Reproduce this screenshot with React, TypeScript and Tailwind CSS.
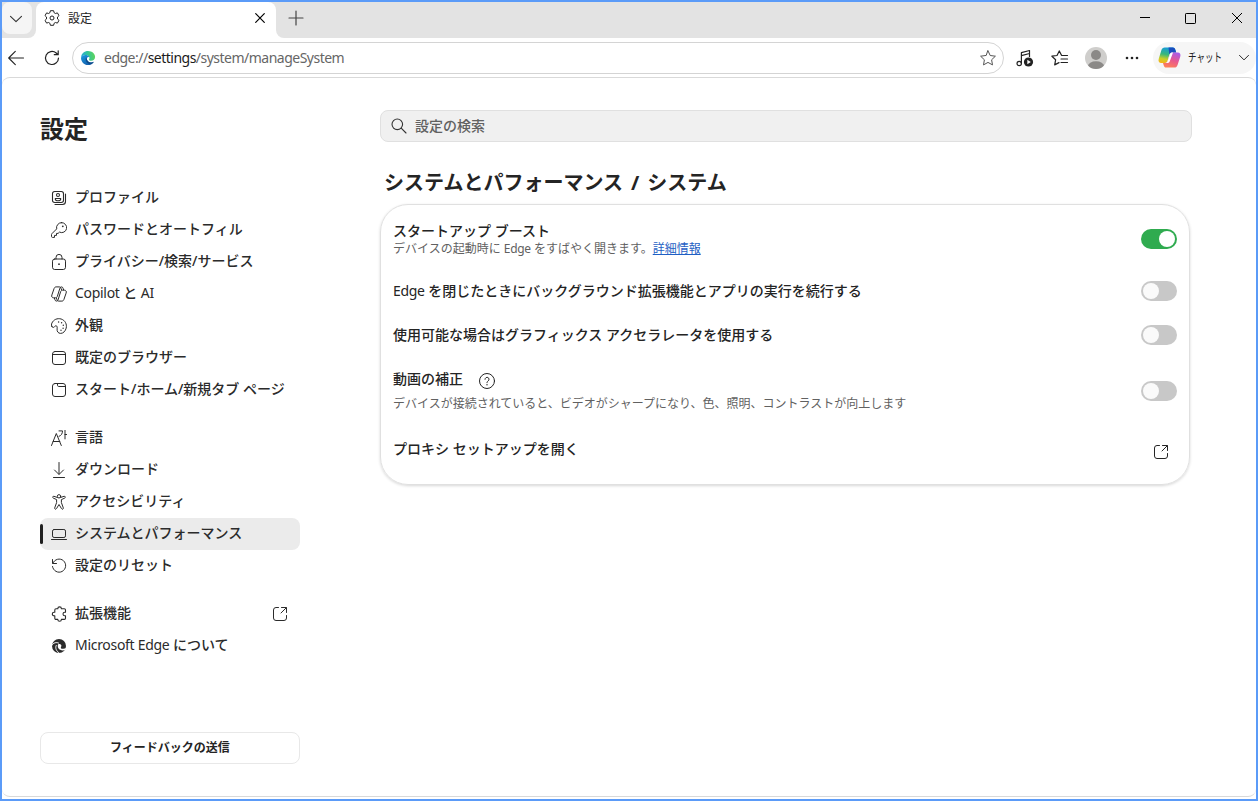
import React from 'react';

interface IconProps {
  children: React.ReactNode;
  className?: string;
}

const Icon: React.FC<IconProps> = ({ children, className = 'w-4 h-4' }) => (
  <svg
    viewBox="0 0 16 16"
    fill="none"
    stroke="currentColor"
    strokeWidth="1"
    strokeLinecap="round"
    strokeLinejoin="round"
    className={`${className} shrink-0`}
  >
    {children}
  </svg>
);

const EXTERNAL = (
  <>
    <path d="M6.5 1.5H4A2.5 2.5 0 0 0 1.5 4v8A2.5 2.5 0 0 0 4 14.5h8a2.5 2.5 0 0 0 2.5-2.5V9.5" />
    <path d="M9.5 1.5h5v5M14.2 1.8 9 7" />
  </>
);

const ICONS: Record<string, React.ReactNode> = {
  profile: (
    <>
      <rect x="1.5" y="1.5" width="11" height="11" rx="2.2" strokeWidth="1.1" />
      <path d="M14.5 4v7.5a3 3 0 0 1-3 3H4" strokeWidth="1.1" />
      <circle cx="7" cy="5" r="1.5" strokeWidth="1.1" />
      <path d="M4.3 8.5h5.4v.4c0 1.1-1 1.9-2.7 1.9s-2.7-.8-2.7-1.9z" strokeWidth="1.1" />
    </>
  ),
  key: (
    <>
      <path d="M10.5.6a5 5 0 0 0-4.8 6.3L.9 11.7a1.2 1.2 0 0 0-.4.9v1.9c0 .5.4.9.9.9h2.1v-2h2v-2h1.6l1.4-1.3a5 5 0 1 0 2-9.5z" />
      <circle cx="11.8" cy="4.3" r=".9" fill="currentColor" stroke="none" />
    </>
  ),
  lock: (
    <>
      <rect x="1.5" y="5" width="13" height="10.5" rx="2.2" />
      <path d="M5 5V3.4a3 3 0 0 1 6 0V5" />
      <circle cx="8" cy="10.2" r=".9" fill="currentColor" stroke="none" />
    </>
  ),
  copilot: (
    <>
      <path d="M10.5 3.700 10.100 2.500C9.800 1.500 9.300.9 8.300.9H5.100C4.100.9 3.500 1.500 3.100 2.500L.9 8.900c-.6 1.700.1 2.900 1.600 2.900h2c1 0 1.600-.6 1.900-1.600l2.300-7.300C9 1.600 9.500.9 10.500.9c.8 0 1.300.5 1.600 1.400l.5 1.500" />
      <path d="m5.500 12.300.4 1.200c.3 1 .8 1.600 1.800 1.600h3.200c1 0 1.600-.6 2-1.600l2.200-6.400c.6-1.700-.1-2.900-1.600-2.900h-2c-1 0-1.600.6-1.900 1.600l-2.300 7.300c-.3 1.300-.8 2-1.800 2-.8 0-1.300-.5-1.600-1.400L3.400 12.200" />
    </>
  ),
  palette: (
    <>
      <path d="M1.100 8.800C.3 7.700.3 6.300.9 5.100 2.500 1.600 6.300-.1 10.100 1c4 1.200 6 5.200 5.100 9.100-.8 3-2.900 5.300-5.500 5.300-2.700 0-3.900-2.100-3.600-4.500.2-1.600.2-2.900-1-3.100-1.300-.2-1.500 1.500-2.600 1.600-.6.100-1-.1-1.400-.6z" />
      <g fill="currentColor" stroke="none">
        <circle cx="7.6" cy="4" r=".7" />
        <circle cx="10.600" cy="4.700" r=".7" />
        <circle cx="12.300" cy="7.200" r=".7" />
        <circle cx="12.100" cy="10.200" r=".7" />
        <circle cx="10" cy="12.300" r=".7" />
      </g>
    </>
  ),
  browser: (
    <>
      <rect x="1.5" y="1.5" width="13" height="13" rx="2.5" />
      <path d="M1.500 4.500h13" />
    </>
  ),
  tabPage: (
    <>
      <rect x="1.5" y="1.5" width="13" height="13" rx="2.5" />
      <path d="M6.500 1.500v1.800c0 .7.500 1.200 1.200 1.200h6.800" />
    </>
  ),
  language: (
    <path d="M.5 15.500 5.300 3.500l5 12M2.200 11.500h6.600M8 .9h3.500c0 2.700-1.200 4.600-3.500 5.500M14 .4v8.500M14 4.500h1.600" />
  ),
  download: <path d="M8 .5v11.500M3.500 8 8 12.500 12.500 8M2.500 15.500h11" />,
  accessibility: (
    <>
      <circle cx="8" cy="2.300" r="1.700" />
      <path d="M6.400 3.500 3 2.300c-1.200-.4-1.900 1.300-.7 1.800l3.300 1.500v3l-1.900 5.300c-.4 1.200 1.300 1.900 1.800.7L8 10.500l2.500 4.100c.5 1.200 2.200.5 1.800-.7l-1.900-5.300v-3l3.300-1.500c1.200-.5.500-2.200-.7-1.800L9.600 3.500" />
    </>
  ),
  system: (
    <>
      <rect x="1.500" y="3.500" width="13" height="8" rx="1.600" />
      <path d="M.5 13.500h15" />
    </>
  ),
  reset: (
    <path d="M1.500 1.500v4h4M1.900 5.200A6.600 6.600 0 1 1 1.500 8.500" />
  ),
  extensions: (
    <path
      d="M6.800 2.700a1.800 1.800 0 0 1 3.600 0h2.900c.7 0 1.200.5 1.200 1.200v2.300h-.7a1.800 1.800 0 0 0 0 3.600h.7v2.400c0 .7-.5 1.200-1.200 1.200h-2.900a1.800 1.800 0 0 1-3.600 0H5c-.7 0-1.200-.5-1.200-1.200V9.800h-.7a1.800 1.800 0 0 1 0-3.600h.7V3.900c0-.7.5-1.200 1.200-1.200z"
      strokeWidth="1.100"
    />
  ),
  edge: (
    <>
      <circle cx="8" cy="8" r="7" fill="currentColor" stroke="none" />
      <path d="M.9 7.300C2.200 4.700 5.200 4 7.500 5" stroke="white" strokeWidth="1" />
      <path d="M7.200 6.300c1-.8 3-.2 3.200 1.300.1 1-.7 1.500-.5 2.300.5 1.200 3.100 1.300 5.500.2l-.8 1.700c-2.600 1.300-6 .5-7.200-1.500-.8-1.400-.8-3-.2-4z" fill="white" stroke="none" />
      <path d="M5.200 7.500c-1.200 2.500 0 5.500 2.800 7.300" stroke="white" strokeWidth="1" />
    </>
  ),
};

interface NavEntry {
  icon: string;
  label: string;
  active?: boolean;
  external?: boolean;
}

const NAV_GROUPS: NavEntry[][] = [
  [
    { icon: 'profile', label: 'プロファイル' },
    { icon: 'key', label: 'パスワードとオートフィル' },
    { icon: 'lock', label: 'プライバシー/検索/サービス' },
    { icon: 'copilot', label: 'Copilot と AI' },
    { icon: 'palette', label: '外観' },
    { icon: 'browser', label: '既定のブラウザー' },
    { icon: 'tabPage', label: 'スタート/ホーム/新規タブ ページ' },
  ],
  [
    { icon: 'language', label: '言語' },
    { icon: 'download', label: 'ダウンロード' },
    { icon: 'accessibility', label: 'アクセシビリティ' },
    { icon: 'system', label: 'システムとパフォーマンス', active: true },
    { icon: 'reset', label: '設定のリセット' },
  ],
  [
    { icon: 'extensions', label: '拡張機能', external: true },
    { icon: 'edge', label: 'Microsoft Edge について' },
  ],
];

// Latin words are set lighter and a little tighter than the Japanese around them
const Label: React.FC<{ text: string }> = ({ text }) => (
  <>
    {text.split(/([A-Za-z]+(?: [A-Za-z]+)*)/).map((part, i) =>
      i % 2 ? <span key={i} className="font-normal tracking-[-0.3px]">{part}</span> : part
    )}
  </>
);

const Toggle: React.FC<{ on?: boolean }> = ({ on }) => (
  <span
    role="switch"
    aria-checked={!!on}
    className={`flex items-center w-9 h-5 px-0.5 rounded-full shrink-0 ${on ? 'bg-[#2fab4f] justify-end' : 'bg-[#c8c8c8] justify-start'}`}
  >
    <span className={`w-4 h-4 rounded-full ${on ? 'bg-white' : 'bg-[#fafafa]'}`} />
  </span>
);

const EdgeLogo = () => (
  <svg viewBox="0 0 16 16" className="w-4 h-4 shrink-0">
    <defs>
      <linearGradient id="edgeTop" x1="0" y1="0.5" x2="1" y2="0.4">
        <stop offset="0" stopColor="#27a9dc" />
        <stop offset="0.5" stopColor="#35c696" />
        <stop offset="1" stopColor="#5fd45a" />
      </linearGradient>
      <linearGradient id="edgeLow" x1="0" y1="0" x2="0.7" y2="1">
        <stop offset="0" stopColor="#1b9ae0" />
        <stop offset="1" stopColor="#125ba8" />
      </linearGradient>
    </defs>
    <path d="M1 7.600C1.300 3.500 4.400 1 8 1c4.200 0 7.100 2.900 7.100 6 0 2.300-1.700 3.800-4 3.800-1.700 0-2.500-.7-2.100-1.300.8-1 .7-2.900-1.300-4C5.300 4.300 2.500 5.300 1 7.600z" fill="url(#edgeTop)" />
    <path d="M1 7.800C2 5.700 4 4.700 6.300 5c1.500.2 2.600 1 2.900 2-2.300-.4-3 1.900-1.700 3.700 1.400 2 4.300 2.300 6.400 1C12.500 14 10.600 15.100 8 15.100c-4 0-7-3.200-7-7.300z" fill="url(#edgeLow)" />
    <path d="M6.200 7.200c-1.500 2.900.6 6.600 4.500 7.100 1.400-.5 2.500-1.500 3.200-2.600-3.300 1.800-7 .3-7.700-4.500z" fill="#0c4a8a" />
  </svg>
);

const CopilotLogo = () => (
  <svg viewBox="0 0 24 24" className="w-[23px] h-[23px] shrink-0">
    <defs>
      <linearGradient id="cpLeft" x1="0.5" y1="0" x2="0.3" y2="1">
        <stop offset="0" stopColor="#159bdc" />
        <stop offset="0.45" stopColor="#38b77b" />
        <stop offset="0.75" stopColor="#c9cf28" />
        <stop offset="1" stopColor="#f4b41a" />
      </linearGradient>
      <linearGradient id="cpRight" x1="0.7" y1="0" x2="0.3" y2="1">
        <stop offset="0" stopColor="#a95ce8" />
        <stop offset="0.5" stopColor="#e8588e" />
        <stop offset="1" stopColor="#ff8155" />
      </linearGradient>
    </defs>
    <path d="M7 1.500h8.500c1.500 0 2 .9 2.500 2.200l1 3h-4.500c-1.600 0-2.200.8-2.600 2.200L10 15.500c-.5 1.500-1.200 2.200-2.700 2.200H3.500c-2.500 0-3.500-1.700-2.700-4.400L3.500 4.500c.7-2 1.700-3 3.500-3z" fill="url(#cpLeft)" />
    <path d="M11 1.500h4.500c1.500 0 2 .9 2.500 2.200l1 3h-4.500c-1.700 0-2.300.9-2.700 2.400z" fill="#194dbd" />
    <path d="M17 22.500H8.500c-1.500 0-2-.9-2.500-2.200l-.8-2.600h2.300c1.500 0 2.200-.8 2.600-2.200L12.300 9c.5-1.500 1.200-2.300 2.700-2.300h5.500c2.500 0 3.500 1.700 2.700 4.400l-2.700 8.400c-.7 2-1.700 3-3.500 3z" fill="url(#cpRight)" />
    <path d="M12.300 9c.4-1.300 1-2.100 2-2.300h1.400l-3.300 9c-.4 1.300-1.100 2-2.300 2H8.200c1-.3 1.600-1 1.900-2.200z" fill="white" />
  </svg>
);

const TitleBar = () => (
  <div className="h-[36px] flex bg-[#e3e3e3] shrink-0">
    <div className="w-[34px] bg-white">
      <div className="w-[34px] h-[36px] bg-[#e3e3e3] rounded-br-lg">
        <div className="w-[30px] h-[32px] flex items-center justify-center bg-[#f5f5f5] rounded-lg">
          <Icon className="w-4 h-4 -ml-0.5 mt-px text-[#333]"><path d="m2.500 5.300 5.500 5.400 5.500-5.400" strokeWidth="1.100" /></Icon>
        </div>
      </div>
    </div>
    <div className="w-[240px] bg-white rounded-t-lg flex items-center pl-2 pr-2 pb-1">
      <svg viewBox="0 0 16 16" className="w-4 h-4 shrink-0" fill="none" stroke="#222" strokeWidth="1" strokeLinejoin="round">
        <path d="M6.400.7h3.200l.5 2 1.300.8 2-.6L15 5.600 13.500 7v2l1.500 1.400-1.600 2.700-2-.6-1.300.8-.5 2H6.400l-.5-2-1.300-.8-2 .6L1 10.400 2.500 9V7L1 5.600l1.600-2.700 2 .6 1.300-.8z" />
        <circle cx="8" cy="8" r="2" />
      </svg>
      <span className="ml-2 pt-0.5 text-xs text-[#222] flex-1">設定</span>
      <Icon className="w-4 h-4"><path d="m3.700 3.700 8.600 8.600M12.300 3.700l-8.600 8.600" strokeWidth="1.200" /></Icon>
    </div>
    <div className="flex-1 bg-white">
      <div className="h-full bg-[#e3e3e3] rounded-bl-lg flex items-center pb-1">
        <Icon className="w-4 h-4 ml-3 text-[#444]"><path d="M8 1v14M1 8h14" strokeWidth="1.200" /></Icon>
        <div className="flex-1" />
        <svg viewBox="0 0 10 10" className="w-2.5 h-2.5 mr-[35px]" stroke="black" fill="none"><path d="M0 4.500h10" /></svg>
        <svg viewBox="0 0 11 11" className="w-[11px] h-[11px] mr-9" stroke="black" fill="none"><rect x=".5" y=".5" width="10" height="10" rx=".7" /></svg>
        <svg viewBox="0 0 10 10" className="w-2.5 h-2.5 mr-3.5" stroke="black" fill="none"><path d="m0 0 10 10M10 0 0 10" /></svg>
      </div>
    </div>
  </div>
);

const Toolbar = () => (
  <div className="h-[39px] flex items-center shrink-0 text-[#222]">
    <Icon className="w-4 h-4 ml-1.5"><path d="M15.500 8H.7M7.300 1.300.7 8l6.600 6.700" strokeWidth="1.100" /></Icon>
    <Icon className="w-4 h-4 ml-5"><path d="M14.500 8a6.500 6.500 0 1 1-2.300-5l1.800 1.600M14.200.8v3.900h-3.900" strokeWidth="1.200" /></Icon>
    <div className="w-[932px] h-8 ml-3 pl-[7px] pr-[7px] flex items-center rounded-full border border-[#d4d4d4] bg-white">
      <EdgeLogo />
      <span className="ml-2 flex-1 text-sm leading-5 tracking-[-0.51px] text-[#666]">
        edge://<span className="text-[#1b1b1b]">settings</span>/system/manageSystem
      </span>
      <Icon className="w-4 h-4 text-[#555]"><path d="m8 .8 2.200 4.700 5.200.7-3.800 3.600.9 5.100L8 12.400l-4.500 2.500.9-5.100L.6 6.200l5.200-.7z" /></Icon>
    </div>
    <svg viewBox="0 0 18 18" className="w-[18px] h-[18px] ml-3 shrink-0" fill="none" stroke="currentColor" strokeWidth="1.200">
      <circle cx="3.200" cy="14.500" r="2.200" />
      <path d="M5.400 14.500V3.700l8.100-2.200V8M5.400 6.700l8.100-2.200" strokeLinejoin="round" />
      <circle cx="12.500" cy="13" r="4.600" fill="currentColor" stroke="none" />
      <path d="m11.300 10.800 3.500 2.200-3.500 2.200z" fill="white" stroke="none" />
    </svg>
    <svg viewBox="0 0 18 16" className="w-[18px] h-4 ml-[17px] shrink-0" fill="none" stroke="currentColor" strokeWidth="1.200" strokeLinecap="round" strokeLinejoin="round">
      <path d="M10.500 5.300 8.300.9 6 5.500.9 6.200l3.700 3.600-.9 5.100 4.300-2.300M11 5.500h5.500M10 9h6.500M10 12.500h6.500" />
    </svg>
    <svg viewBox="0 0 22 22" className="w-[22px] h-[22px] ml-4 shrink-0">
      <clipPath id="avatar"><circle cx="11" cy="11" r="11" /></clipPath>
      <g clipPath="url(#avatar)">
        <rect width="22" height="22" fill="#cfcecc" />
        <circle cx="11" cy="8" r="5" fill="#8b8987" />
        <ellipse cx="11" cy="19" rx="8" ry="4.700" fill="#8b8987" />
      </g>
    </svg>
    <Icon className="w-4 h-4 ml-[17px]">
      <g fill="currentColor" stroke="none">
        <circle cx="3" cy="8" r="1.300" />
        <circle cx="8" cy="8" r="1.300" />
        <circle cx="13" cy="8" r="1.300" />
      </g>
    </Icon>
    <div className="flex items-center flex-1 h-8 ml-[13px] pl-[5px] bg-[#f6f6f6] rounded-full">
      <CopilotLogo />
      <span className="w-[48px] ml-[7px] text-xs whitespace-nowrap origin-left scale-x-[0.71]">チャット</span>
      <Icon className="w-3 h-3 ml-auto mr-1.5"><path d="m2 4.500 6 6 6-6" strokeWidth="1.300" /></Icon>
    </div>
  </div>
);

const Sidebar = () => (
  <aside className="w-[260px] shrink-0 flex flex-col">
    <h1 className="text-2xl leading-8 font-bold text-[#242424]">設定</h1>
    <nav className="mt-[37px] flex flex-col gap-4">
      {NAV_GROUPS.map((group, i) => (
        <ul key={i}>
          {group.map((item) => (
            <li
              key={item.icon}
              className={`relative h-8 pl-[11px] pr-3 flex items-center text-sm text-[#2b2b2b] whitespace-nowrap ${item.active ? 'bg-[#ebebeb] rounded-lg' : ''}`}
            >
              {item.active && <span className="absolute left-0 top-1.5 w-[3px] h-5 rounded-full bg-[#1f1f1f]" />}
              <Icon>{ICONS[item.icon]}</Icon>
              <span className="ml-2 pb-0.5 flex-1 font-medium">
                <Label text={item.label} />
              </span>
              {item.external && <Icon>{EXTERNAL}</Icon>}
            </li>
          ))}
        </ul>
      ))}
    </nav>
    <button className="mt-[70px] h-8 rounded-lg border border-[#e8e8e8] text-xs font-bold text-[#242424]">
      フィードバックの送信
    </button>
  </aside>
);

const SystemPage = () => (
  <main className="w-[812px] ml-20 -mt-[3px]">
    <div className="h-8 pl-2.5 flex items-center rounded-lg border border-[#e0e0e0] bg-[#f0f0f0] text-sm font-medium text-[#616161]">
      <Icon className="w-4 h-4 text-[#333]">
        <circle cx="6.300" cy="6.300" r="5.300" strokeWidth="1.100" />
        <path d="m10.200 10.200 4.800 4.800" strokeWidth="1.100" />
      </Icon>
      <span className="ml-2">設定の検索</span>
    </div>
    <h2 className="mt-[27px] ml-1 text-xl leading-7 font-bold text-[#242424]">
      システムとパフォーマンス<span className="mx-2">/</span>システム
    </h2>
    <section className="w-[810px] h-[281px] mt-[7px] pl-3 pr-3 rounded-[28px] border border-[#e0e0e0] shadow-[0_1px_3px_rgba(0,0,0,0.16)] text-sm font-medium text-[#242424]">
      <div className="h-[64px] pt-1 flex items-center justify-between">
        <div>
          <p className="leading-5 -mt-px">スタートアップ ブースト</p>
          <p className="text-xs leading-4 font-normal text-[#616161]">
            <Label text="デバイスの起動時に Edge をすばやく開きます。" />
            <a className="text-[#1f5fc4] underline">詳細情報</a>
          </p>
        </div>
        <Toggle on />
      </div>
      <div className="h-[44px] flex items-center justify-between">
        <p><Label text="Edge を閉じたときにバックグラウンド拡張機能とアプリの実行を続行する" /></p>
        <Toggle />
      </div>
      <div className="h-[44px] flex items-center justify-between">
        <p>使用可能な場合はグラフィックス アクセラレータを使用する</p>
        <Toggle />
      </div>
      <div className="h-[68px] flex items-center justify-between">
        <div>
          <div className="flex items-center gap-4">
            <p className="leading-5 -mt-0.5">動画の補正</p>
            <Icon className="w-4 h-4 mt-0.5">
              <circle cx="8" cy="8" r="7.500" />
              <path d="M6 6.300a2 2 0 1 1 3.200 1.600C8.400 8.500 8 8.800 8 9.700" />
              <circle cx="8" cy="11.800" r=".7" fill="currentColor" stroke="none" />
            </Icon>
          </div>
          <p className="mt-[7px] text-xs leading-4 font-normal text-[#616161]">
            デバイスが接続されていると、ビデオがシャープになり、色、照明、コントラストが向上します
          </p>
        </div>
        <Toggle />
      </div>
      <div className="h-[53px] flex items-center justify-between">
        <p className="-mt-1.5">プロキシ セットアップを開く</p>
        <Icon className="w-4 h-4 mr-2">{EXTERNAL}</Icon>
      </div>
    </section>
  </main>
);

export default function App() {
  return (
    <div className="w-[1258px] h-[801px] flex flex-col overflow-hidden bg-white border-2 border-[#5b9bf8] font-['Noto_Sans','Noto_Sans_CJK_JP',sans-serif]">
      <TitleBar />
      <Toolbar />
      <div className="h-[720px] shrink-0 flex items-start pl-[38px] pt-[35px] rounded-lg border-y border-y-[#d9d9d9]">
        <Sidebar />
        <SystemPage />
      </div>
    </div>
  );
}
